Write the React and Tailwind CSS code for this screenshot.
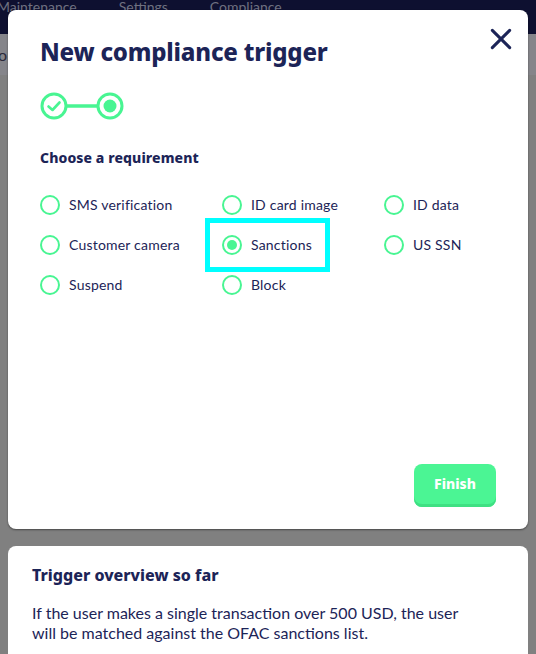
import { useState } from 'react'

const options = [
  'SMS verification',
  'ID card image',
  'ID data',
  'Customer camera',
  'Sanctions',
  'US SSN',
  'Suspend',
  'Block'
]

function Radio({ checked }) {
  return (
    <span className="flex h-[20px] w-[20px] shrink-0 items-center justify-center rounded-full border-2 border-[#48f592]">
      {checked && <span className="h-[10px] w-[10px] rounded-full bg-[#48f592]" />}
    </span>
  )
}

export default function App() {
  const [selected, setSelected] = useState('Sanctions')

  return (
    <div className="relative h-[654px] w-[536px] overflow-hidden bg-[#808080] font-['Lato',sans-serif] text-[#1c2457]">
      {/* dimmed page behind */}
      <div className="flex h-[34px] gap-[42px] bg-[#0e1030] text-[14px] leading-[14px] text-[#6f7080]">
        <span className="-ml-[3px]">Maintenance</span>
        <span>Settings</span>
        <span>Compliance</span>
      </div>
      <div className="flex h-[41px] items-center justify-between bg-[#85858a] text-[16px] text-[#2a2a3a]">
        <span className="-ml-[2px]">o</span>
      </div>

      <div className="absolute inset-0">
        {/* modal */}
        <div className="mx-[8px] mt-[10px] flex h-[519px] flex-col rounded-[8px] bg-white px-[32px] pb-[22px] pt-[24px] shadow-[0_1px_2px_rgba(0,0,0,0.45)]">
          <div className="flex items-start justify-between">
            <h1 className="font-['Noto_Sans',sans-serif] text-[24px] font-extrabold leading-[36px] tracking-[-0.2px]">New compliance trigger</h1>
            <svg width="26" height="26" viewBox="0 0 24 24" className="-mr-[18px] -mt-[8px]" fill="none" stroke="#1c2457" strokeWidth="2.8" strokeLinecap="round">
              <path d="M4 4L20 20M20 4L4 20" />
            </svg>
          </div>

          <div className="mt-[21px] flex items-center">
            <svg width="88" height="30" viewBox="0 0 88 30" fill="none">
              <circle cx="14" cy="15" r="12" stroke="#48f592" strokeWidth="3" />
              <path d="M8.5 15.5L12.5 19L19.5 11.5" stroke="#48f592" strokeWidth="2.6" strokeLinecap="round" strokeLinejoin="round" />
              <line x1="27" y1="15" x2="58" y2="15" stroke="#48f592" strokeWidth="3.5" />
              <circle cx="70" cy="15" r="12" stroke="#48f592" strokeWidth="3" />
              <circle cx="70" cy="15" r="6.5" fill="#48f592" />
            </svg>
          </div>

          <h2 className="mt-[27px] font-['Noto_Sans',sans-serif] text-[14px] font-extrabold leading-[20px] tracking-[0.1px]">Choose a requirement</h2>

          <div className="mt-[27px] grid grid-cols-[182px_162px_auto] gap-y-[20px]">
            {options.map((opt) => {
              const active = opt === selected
              return (
                <button
                  key={opt}
                  type="button"
                  onClick={() => setSelected(opt)}
                  className="flex h-[20px] items-center text-left"
                >
                  <span className={active ? '-my-[17px] -ml-[17px] flex items-center gap-[9px] border-[5px] border-[#0ff] py-[12px] pl-[12px] pr-[13px]' : 'flex items-center gap-[9px]'}>
                    <Radio checked={active} />
                    <span className="text-[14px] leading-[20px] tracking-[0.2px]">{opt}</span>
                  </span>
                </button>
              )
            })}
          </div>

          <div className="mt-auto flex justify-end">
            <button
              type="button"
              className="h-[43px] w-[82px] rounded-[8px] bg-[#4bf594] pb-[4px] font-['Noto_Sans',sans-serif] text-[14px] font-extrabold text-white shadow-[inset_0_-3px_0_#3fe083]"
            >
              Finish
            </button>
          </div>
        </div>

        {/* overview card */}
        <div className="mx-[8px] mt-[17px] h-[200px] rounded-[8px] bg-white px-[24px] pt-[18px]">
          <h3 className="font-['Noto_Sans',sans-serif] text-[16px] font-extrabold leading-[22px]">Trigger overview so far</h3>
          <p className="mt-[17px] max-w-[450px] text-[16px] leading-[20px]">
            If the user makes a single transaction over 500 USD, the user will be matched against the OFAC sanctions list.
          </p>
        </div>
      </div>
    </div>
  )
}
